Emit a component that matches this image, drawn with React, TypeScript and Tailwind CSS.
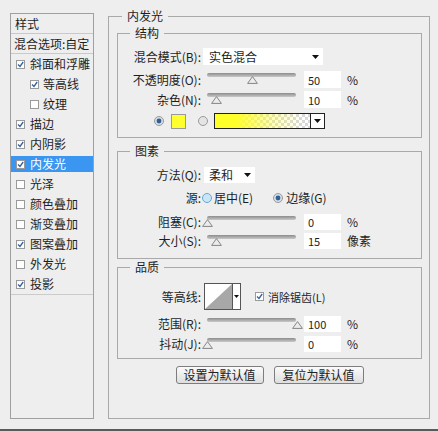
import React from 'react';
import clsx from 'clsx';

const sideItems = [
  { t: '斜面和浮雕', on: true, sub: false },
  { t: '等高线', on: true, sub: true },
  { t: '纹理', on: false, sub: true },
  { t: '描边', on: true, sub: false },
  { t: '内阴影', on: true, sub: false },
  { t: '内发光', on: true, sub: false, sel: true },
  { t: '光泽', on: false, sub: false },
  { t: '颜色叠加', on: false, sub: false },
  { t: '渐变叠加', on: false, sub: false },
  { t: '图案叠加', on: true, sub: false },
  { t: '外发光', on: false, sub: false },
  { t: '投影', on: true, sub: false },
];

const Check = ({ on }: { on: boolean }) => (
  <span className="w-[9px] h-[9px] shrink-0 border border-[#9a9a9a] bg-white flex items-center justify-center">
    {on && (
      <svg width="7" height="7" viewBox="0 0 7 7">
        <path d="M1 3.5 L3 5.5 L6.2 1" stroke="#35609e" strokeWidth="1.3" fill="none" />
      </svg>
    )}
  </span>
);

const Radio = ({ on, hover }: { on: boolean; hover?: boolean }) => (
  <svg width="10" height="10" viewBox="0 0 10 10" className="shrink-0">
    <circle cx="5" cy="5" r="4.5" fill={hover ? '#c9e6f8' : on ? '#d6dde6' : '#e4e4e4'} stroke={hover ? '#6aa6d4' : '#9a9a9a'} />
    {on && <circle cx="5" cy="5" r="2.4" fill="#2f5f97" />}
  </svg>
);

const Arrow = () => (
  <svg width="7" height="4" viewBox="0 0 7 4" className="shrink-0">
    <path d="M0 0 H7 L3.5 4 Z" fill="#111" />
  </svg>
);

const Slider = ({ pos }: { pos: number }) => (
  <div className="relative ml-[2px] w-[97px] h-full shrink-0">
    <div className="mx-[4px] mt-[2px] h-[4px] rounded-[2px] bg-[linear-gradient(#8c8c8c,#c9c9c9)]" />
    <svg
      width="11"
      height="8"
      viewBox="0 0 11 8"
      className="absolute top-[5px]"
      style={{ left: 4 + pos * 90 - 5.5 }}
    >
      <path d="M5.5 0.6 L10.4 7.4 H0.6 Z" fill="#ececec" stroke="#858585" strokeLinejoin="round" />
    </svg>
  </div>
);

const Value = ({ v, unit }: { v: string; unit: string }) => (
  <>
    <div className="ml-[4px] w-[37px] h-full bg-white pl-[4px] flex items-center text-[11px]">{v}</div>
    <span className="ml-[6px]">{unit}</span>
  </>
);

const Label = ({ t }: { t: string }) => <span className="w-[83px] shrink-0 text-right">{t}</span>;

const Group = ({ title, className, children }: { title: string; className: string; children: React.ReactNode }) => (
  <fieldset className={clsx('border border-[#a9a9a9] w-full', className)}>
    <legend className="ml-[12px] px-[5px] leading-[16px]">{title}</legend>
    {children}
  </fieldset>
);

const Button = ({ t, w }: { t: string; w: string }) => (
  <button className={clsx('h-[18px] rounded-[3px] border border-[#7d7d7d] bg-[linear-gradient(#fbfbfb,#dedede)] text-[12px] leading-[16px] text-[#222]', w)}>
    {t}
  </button>
);

export default function App() {
  return (
    <div className="w-[438px] h-[431px] bg-[#eeeeee] text-[12px] leading-[16px] text-[#1e1e1e] font-['Noto_Sans_CJK_SC','Noto_Sans',sans-serif] overflow-hidden">
      <div className="h-[429px] flex pl-[10px] pt-[8px]">
        {/* styles list */}
        <div className="mt-[5px] w-[84px] h-[406px] border border-[#a0a0a0] flex flex-col">
          <div className="h-[20px] shrink-0 border-b border-[#c9c9c9] pl-[4px] flex items-center">样式</div>
          <div className="h-[20px] shrink-0 border-b border-[#c9c9c9] pl-[3px] flex items-center">混合选项:自定</div>
          {sideItems.map((it) => (
            <div key={it.t} className="h-[20px] shrink-0 flex items-center">
              <div
                className={clsx(
                  'h-[16px] w-full flex items-center',
                  it.sub ? 'pl-[19px] gap-[4px]' : 'pl-[5px] gap-[5px]',
                  it.sel && 'bg-[#3a96f0] text-white'
                )}
              >
                <Check on={it.on} />
                <span>{it.t}</span>
              </div>
            </div>
          ))}
          <div className="h-px shrink-0 bg-[#cbcbcb]" />
        </div>

        {/* inner glow */}
        <fieldset className="ml-[14px] w-[322px] h-[411px] border border-[#a9a9a9] pl-[8px] pr-[7px]">
          <legend className="ml-[5px] px-[5px] leading-[16px]">内发光</legend>

          <Group title="结构" className="mt-[1px] h-[113px]">
            <div className="mt-[7px] h-[17px] flex items-center">
              <Label t="混合模式(B):" />
              <div className="ml-[2px] w-[120px] h-full bg-white pl-[6px] pr-[4px] flex items-center justify-between">
                <span>实色混合</span>
                <Arrow />
              </div>
            </div>
            <div className="mt-[6px] h-[17px] flex items-center">
              <Label t="不透明度(O):" />
              <Slider pos={0.5} />
              <Value v="50" unit="%" />
            </div>
            <div className="mt-[3px] h-[17px] flex items-center">
              <Label t="杂色(N):" />
              <Slider pos={0.1} />
              <Value v="10" unit="%" />
            </div>
            <div className="mt-[5px] h-[16px] pl-[36px] flex items-center">
              <Radio on />
              <div className="ml-[7px] w-[15px] h-[15px] border border-[#9a9a9a] bg-[#ffff2e]" />
              <div className="ml-[12px]">
                <Radio on={false} />
              </div>
              <div className="ml-[6px] w-[111px] h-[16px] border border-[#222] flex">
                <div className="flex-1 bg-[image:conic-gradient(#d9d9d9_25%,#ffffff_0_50%,#d9d9d9_0_75%,#ffffff_0)] bg-[length:6px_6px]">
                  <div className="h-full w-full bg-[linear-gradient(to_right,#ffff2a_0%,#ffff2a_22%,rgba(255,255,42,0.35)_60%,rgba(255,255,42,0)_92%)]" />
                </div>
                <div className="w-[14px] border-l border-[#222] bg-white flex items-center justify-center">
                  <Arrow />
                </div>
              </div>
            </div>
          </Group>

          <Group title="图素" className="mt-[5px] h-[116px]">
            <div className="mt-[8px] h-[16px] flex items-center">
              <Label t="方法(Q):" />
              <div className="ml-[3px] w-[51px] h-full bg-white pl-[5px] pr-[4px] flex items-center justify-between">
                <span>柔和</span>
                <Arrow />
              </div>
            </div>
            <div className="mt-[7px] h-[16px] flex items-center">
              <Label t="源:" />
              <div className="ml-[1px]">
                <Radio on={false} hover />
              </div>
              <span className="ml-[2px]">居中(E)</span>
              <div className="ml-[20px]">
                <Radio on />
              </div>
              <span className="ml-[3px]">边缘(G)</span>
            </div>
            <div className="mt-[8px] h-[16px] flex items-center">
              <Label t="阻塞(C):" />
              <Slider pos={0} />
              <Value v="0" unit="%" />
            </div>
            <div className="mt-[3px] h-[16px] flex items-center">
              <Label t="大小(S):" />
              <Slider pos={0.11} />
              <Value v="15" unit="像素" />
            </div>
          </Group>

          <Group title="品质" className="h-[100px]">
            <div className="mt-[8px] h-[27px] flex items-center">
              <Label t="等高线:" />
              <div className="ml-[3px] w-[37px] h-[27px] border border-[#555] bg-white flex">
                <svg width="27" height="25" viewBox="0 0 27 25" className="shrink-0">
                  <path d="M0 25 L27 0 V25 Z" fill="#a8a8a8" />
                </svg>
                <div className="flex-1 border-l border-[#555] flex items-center justify-center">
                  <svg width="5" height="3" viewBox="0 0 5 3">
                    <path d="M0 0 H5 L2.5 3 Z" fill="#111" />
                  </svg>
                </div>
              </div>
              <div className="ml-[14px]">
                <Check on />
              </div>
              <span className="ml-[4px] text-[11px]">消除锯齿(L)</span>
            </div>
            <div className="mt-[6px] h-[16px] flex items-center">
              <Label t="范围(R):" />
              <Slider pos={1} />
              <Value v="100" unit="%" />
            </div>
            <div className="mt-[4px] h-[16px] flex items-center">
              <Label t="抖动(J):" />
              <Slider pos={0} />
              <Value v="0" unit="%" />
            </div>
          </Group>

          <div className="mt-[7px] flex justify-center gap-[10px]">
            <Button t="设置为默认值" w="w-[88px]" />
            <Button t="复位为默认值" w="w-[90px]" />
          </div>
        </fieldset>
      </div>
      <div className="h-[2px] bg-[#5a5a5a]" />
    </div>
  );
}
